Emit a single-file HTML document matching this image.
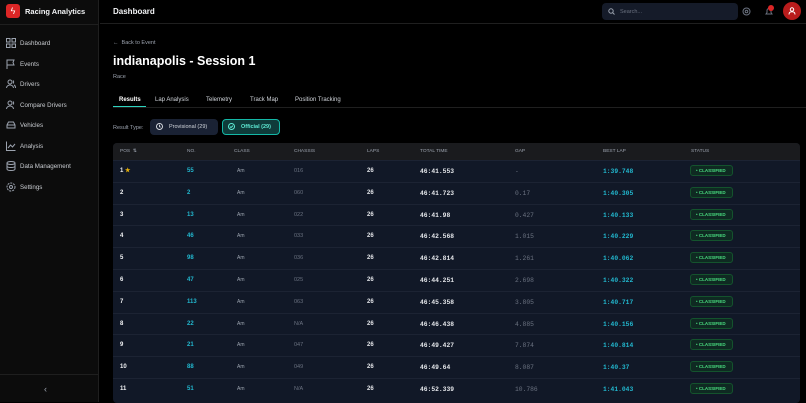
<!DOCTYPE html>
<html><head><meta charset="utf-8"><style>
*{box-sizing:border-box;margin:0;padding:0}
body{width:806px;height:402px;overflow:hidden;background:#000;font-family:"Liberation Sans",sans-serif;color:#e5e7eb;position:relative}
.sb{position:absolute;left:0;top:0;width:99px;height:402px;background:#0c0c0c;border-right:1px solid #1f1f1f}
.logo{position:absolute;left:6px;top:4px;width:14px;height:14px;background:#dc2626;border-radius:3px;color:#fff;font-size:9px;text-align:center;line-height:14px}
.brand{position:absolute;left:25px;top:7px;font-size:7.5px;font-weight:bold;color:#f3f4f6}
.sbline{position:absolute;left:0;top:24px;width:99px;border-top:1px solid #1f1f1f}
.nav{position:absolute;left:6px;font-size:6.2px;color:#c9ccd1}
.nav svg{position:absolute;left:0;top:-2px}
.nav span{position:absolute;left:14px;top:0;white-space:nowrap}
.sbbot{position:absolute;left:0;top:374px;width:99px;border-top:1px solid #1f1f1f}
.hdr{position:absolute;left:100px;top:0;right:0;height:24px;border-bottom:1px solid #1f1f1f}
.title{position:absolute;left:113px;top:7px;font-size:8px;font-weight:bold;color:#f3f4f6}
.search{position:absolute;left:602px;top:3px;width:136px;height:17px;background:#151b29;border-radius:4px;font-size:5.5px;color:#6b7280;padding:6px 0 0 18px}
.abs{position:absolute}
.tabs span{position:absolute;top:97px;font-size:6px;color:#d1d5db}
.t{position:absolute;left:113px;top:143px;width:687px;height:260px;background:#111827;border-radius:4px;overflow:hidden}
.th{position:absolute;left:0;top:0;width:100%;height:17px;background:#1a1b1e;font-size:4.8px;color:#9ca3af}
.th span,.r span{position:absolute}
.th span{top:6px}
.r{position:absolute;left:0;width:100%;height:22px;border-top:1px solid #1c2333;font-size:6px}
.r span{top:0;line-height:21px;white-space:nowrap}
.pos{color:#f3f4f6;font-weight:bold}
.no{color:#22b8cf;font-weight:bold}
.cl{color:#9ca3af;font-size:5px}
.ch{color:#6b7280;font-size:5.5px}
.lp{color:#e5e7eb;font-weight:bold}
.tt{color:#e5e7eb;font-family:"Liberation Mono",monospace;font-weight:bold;font-size:6.3px}
.gp{color:#6b7280;font-family:"Liberation Mono",monospace;font-size:6.3px}
.bl{color:#22b8cf;font-family:"Liberation Mono",monospace;font-weight:bold;font-size:6.3px}
.r .st{top:4px;height:11px;width:43px;background:#0f2a22;border:1px solid #14532d;border-radius:3px;color:#4ade80;font-size:4.5px;font-weight:bold;line-height:9px;padding-left:5px}
</style></head><body>
<div class="sb">
<div class="logo">ϟ</div><div class="brand">Racing Analytics</div>
<div class="sbline"></div>
<div class="nav" style="top:40px"><svg width="10" height="10" viewBox="0 0 10 10" fill="none" stroke="#9ca3af" stroke-width="1"><rect x="0.5" y="0.5" width="3.5" height="3.5"/><rect x="6" y="0.5" width="3.5" height="3.5"/><rect x="0.5" y="6" width="3.5" height="3.5"/><rect x="6" y="6" width="3.5" height="3.5"/></svg><span>Dashboard</span></div>
<div class="nav" style="top:61px"><svg width="10" height="10" viewBox="0 0 10 10" fill="none" stroke="#9ca3af"><path d="M1 10V1h7l-1 2.5 1 2.5H1"/></svg><span>Events</span></div>
<div class="nav" style="top:81px"><svg width="10" height="10" viewBox="0 0 10 10" fill="none" stroke="#9ca3af"><circle cx="4" cy="3" r="2"/><path d="M0.5 9c0-2 2-3 3.5-3s3.5 1 3.5 3M7 1.5a2 2 0 010 3M8 6c1 .5 1.5 1.5 1.5 3"/></svg><span>Drivers</span></div>
<div class="nav" style="top:102px"><svg width="10" height="10" viewBox="0 0 10 10" fill="none" stroke="#9ca3af"><circle cx="4" cy="3" r="2"/><path d="M0.5 9c0-2 2-3 3.5-3s3.5 1 3.5 3M7 1.5a2 2 0 010 3"/></svg><span>Compare Drivers</span></div>
<div class="nav" style="top:122px"><svg width="10" height="10" viewBox="0 0 10 10" fill="none" stroke="#9ca3af"><path d="M1 8V5l1.5-3h5L9 5v3zM1 5h8"/></svg><span>Vehicles</span></div>
<div class="nav" style="top:143px"><svg width="10" height="10" viewBox="0 0 10 10" fill="none" stroke="#9ca3af"><path d="M0.5 0.5v9h9M2 7l2.5-3 2 2L9 3"/></svg><span>Analysis</span></div>
<div class="nav" style="top:163px"><svg width="10" height="10" viewBox="0 0 10 10" fill="none" stroke="#9ca3af"><ellipse cx="5" cy="2" rx="4" ry="1.5"/><path d="M1 2v6c0 1 2 1.5 4 1.5S9 9 9 8V2M1 5c0 1 2 1.5 4 1.5S9 6 9 5"/></svg><span>Data Management</span></div>
<div class="nav" style="top:184px"><svg width="10" height="10" viewBox="0 0 10 10" fill="none" stroke="#9ca3af"><circle cx="5" cy="5" r="1.5"/><circle cx="5" cy="5" r="4" stroke-dasharray="2 1"/></svg><span>Settings</span></div>
<div class="sbbot"></div>
<div class="abs" style="left:44px;top:384px;color:#9ca3af;font-size:9px">‹</div>
</div>
<div class="hdr"></div>
<div class="title">Dashboard</div>
<div class="search">Search...<svg class="abs" style="left:6px;top:5px" width="7" height="7" viewBox="0 0 7 7" fill="none" stroke="#9ca3af"><circle cx="3" cy="3" r="2.2"/><path d="M4.7 4.7L6.5 6.5"/></svg></div>
<svg class="abs" style="left:742px;top:7px" width="9" height="9" viewBox="0 0 9 9" fill="none" stroke="#6b7280"><circle cx="4.5" cy="4.5" r="3.5"/><circle cx="4.5" cy="4.5" r="1.3"/></svg>
<svg class="abs" style="left:765px;top:7px" width="8" height="9" viewBox="0 0 8 9" fill="none" stroke="#6b7280"><path d="M1 7h6L6 5.5V3.5a2 2 0 00-4 0v2z"/></svg>
<div class="abs" style="left:768px;top:5px;width:6px;height:6px;border-radius:50%;background:#dc2626"></div>
<div class="abs" style="left:783px;top:2px;width:18px;height:18px;border-radius:50%;background:#b91c1c"></div>
<svg class="abs" style="left:788px;top:7px" width="8" height="8" viewBox="0 0 8 8" fill="none" stroke="#fff"><circle cx="4" cy="2.5" r="1.7"/><path d="M1 7.5c0-2 1.5-2.7 3-2.7s3 .7 3 2.7"/></svg>

<div class="abs" style="left:113px;top:40px;font-size:5.5px;color:#9ca3af">← &nbsp;Back to Event</div>
<div class="abs" style="left:113px;top:54px;font-size:12.5px;font-weight:bold;color:#fff">indianapolis - Session 1</div>
<div class="abs" style="left:113px;top:74px;font-size:5.5px;color:#9ca3af">Race</div>
<div class="tabs"><span style="left:119px;color:#fff;font-weight:bold">Results</span><span style="left:155px">Lap Analysis</span><span style="left:206px">Telemetry</span><span style="left:250px">Track Map</span><span style="left:295px">Position Tracking</span></div>
<div class="abs" style="left:113px;top:107px;width:693px;border-top:1px solid #1f1f1f"></div>
<div class="abs" style="left:113px;top:106px;width:33px;border-top:1px solid #2dd4bf"></div>
<div class="abs" style="left:113px;top:125px;font-size:5.5px;color:#9ca3af">Result Type:</div>
<div class="abs" style="left:150px;top:119px;width:68px;height:16px;background:#1a2234;border-radius:4px;font-size:5.5px;color:#d1d5db;padding:5px 0 0 19px">Provisional (29)</div>
<svg class="abs" style="left:156px;top:123px" width="7" height="7" viewBox="0 0 7 7" fill="none" stroke="#d1d5db"><circle cx="3.5" cy="3.5" r="3"/><path d="M3.5 1.7v1.8l1 .8"/></svg>
<div class="abs" style="left:222px;top:119px;width:58px;height:16px;background:#0f3b3a;border:1px solid #14b8a6;border-radius:4px;font-size:5.5px;color:#5eead4;font-weight:bold;padding:4px 0 0 18px">Official (29)</div>
<svg class="abs" style="left:228px;top:123px" width="7" height="7" viewBox="0 0 7 7" fill="none" stroke="#5eead4"><circle cx="3.5" cy="3.5" r="3"/><path d="M2 3.6l1 1 2-2"/></svg>

<div class="t">
<div class="th"><span style="left:7px">POS &nbsp;⇅</span><span style="left:74px">NO.</span><span style="left:121px">CLASS</span><span style="left:181px">CHASSIS</span><span style="left:254px">LAPS</span><span style="left:307px">TOTAL TIME</span><span style="left:402px">GAP</span><span style="left:490px">BEST LAP</span><span style="left:578px">STATUS</span></div>
<div id="rows"></div>
</div>
<script>
const d=[["1","55","016","46:41.553","-","1:39.748"],["2","2","060","46:41.723","0.17","1:40.305"],["3","13","022","46:41.98","0.427","1:40.133"],["4","46","033","46:42.568","1.015","1:40.229"],["5","98","036","46:42.814","1.261","1:40.062"],["6","47","025","46:44.251","2.698","1:40.322"],["7","113","063","46:45.358","3.805","1:40.717"],["8","22","N/A","46:46.438","4.885","1:40.156"],["9","21","047","46:49.427","7.874","1:40.814"],["10","88","049","46:49.64","8.087","1:40.37"],["11","51","N/A","46:52.339","10.786","1:41.043"]];
let h="";d.forEach((r,i)=>{h+=`<div class="r" style="top:${17+i*21.8}px"><span class="pos" style="left:7px">${r[0]}${i==0?' <b style="color:#eab308">★</b>':''}</span><span class="no" style="left:74px">${r[1]}</span><span class="cl" style="left:124px">Am</span><span class="ch" style="left:181px">${r[2]}</span><span class="lp" style="left:254px">26</span><span class="tt" style="left:307px">${r[3]}</span><span class="gp" style="left:402px">${r[4]}</span><span class="bl" style="left:490px">${r[5]}</span><span class="st" style="left:577px">• CLASSIFIED</span></div>`});
document.getElementById("rows").innerHTML=h;
</script>
</body></html>
